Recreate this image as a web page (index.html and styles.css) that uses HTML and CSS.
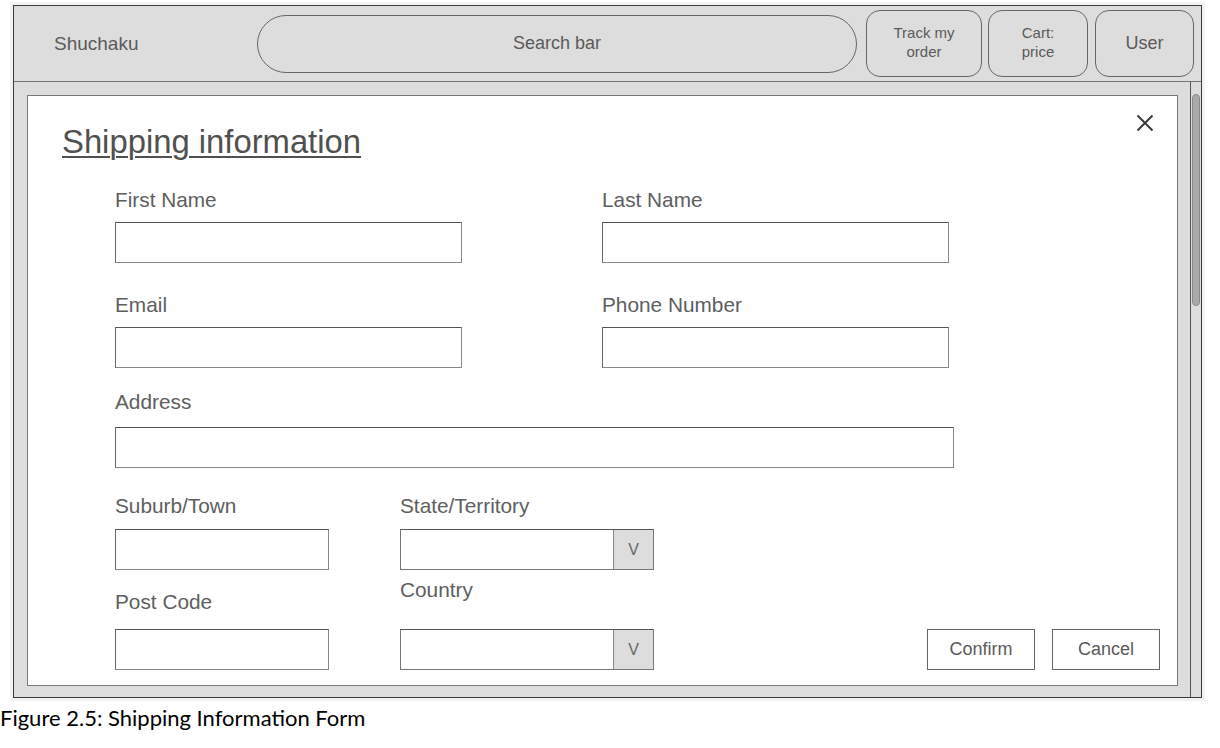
FILE: index.html
```html
<!DOCTYPE html>
<html lang="en">
<head>
    <meta charset="UTF-8">
    <meta name="viewport" content="width=device-width, initial-scale=1.0">
    <title>Shuchaku - Shipping information</title>
    <link rel="stylesheet" href="styles.css">
</head>
<body>
    <div class="frame">
        <header class="top-bar">
            <div class="logo">Shuchaku</div>
            <div class="search-bar">Search bar</div>
            <div class="nav-button nav-track">Track my<br>order</div>
            <div class="nav-button nav-cart">Cart:<br>price</div>
            <div class="nav-button nav-user">User</div>
        </header>

        <div class="frame-body">
            <div class="content">
                <div class="dialog">
                    <svg class="close-icon" width="18" height="18" viewBox="0 0 18 18">
                        <path d="M1.5 1.5 L16.5 16.5 M16.5 1.5 L1.5 16.5" stroke="#3a3a3a" stroke-width="2" fill="none"/>
                    </svg>
                    <h1 class="dialog-title">Shipping information</h1>

                    <form class="shipping-form">
                        <div class="form-row">
                            <div class="field">
                                <label class="field-label">First Name</label>
                                <div class="text-input"></div>
                            </div>
                            <div class="field">
                                <label class="field-label">Last Name</label>
                                <div class="text-input"></div>
                            </div>
                        </div>

                        <div class="form-row">
                            <div class="field">
                                <label class="field-label">Email</label>
                                <div class="text-input"></div>
                            </div>
                            <div class="field">
                                <label class="field-label">Phone Number</label>
                                <div class="text-input"></div>
                            </div>
                        </div>

                        <div class="form-row form-row-address">
                            <div class="field field-wide">
                                <label class="field-label">Address</label>
                                <div class="text-input"></div>
                            </div>
                        </div>

                        <div class="locality-grid">
                            <label class="field-label grid-suburb">Suburb/Town</label>
                            <label class="field-label grid-state">State/Territory</label>
                            <div class="text-input"></div>
                            <div class="select-input">
                                <div class="select-value"></div>
                                <div class="select-arrow">V</div>
                            </div>
                            <div></div>
                            <label class="field-label label-postcode">Post Code</label>
                            <label class="field-label label-country">Country</label>
                            <div></div>
                            <div class="text-input"></div>
                            <div class="select-input">
                                <div class="select-value"></div>
                                <div class="select-arrow">V</div>
                            </div>
                            <div class="form-actions">
                                <div class="action-button">Confirm</div>
                                <div class="action-button">Cancel</div>
                            </div>
                        </div>
                    </form>
                </div>
            </div>
            <div class="scrollbar">
                <div class="scroll-thumb"></div>
            </div>
        </div>
    </div>
    <p class="caption">Figure 2.5: Shipping Information Form</p>
</body>
</html>
```

FILE: styles.css
```css
body {
    margin: 0;
    background-color: #ffffff;
    font-family: 'Liberation Sans', Arial, sans-serif;
    color: #5a5a5a;
}

.frame {
    box-sizing: border-box;
    width: 1189px;
    height: 693px;
    margin: 5px 0 0 13px;
    border: 1px solid #3a3a3a;
    background-color: #dddddd;
    box-shadow: 0 0 0 3px #f2f2f2;
}

/* top bar */

.top-bar {
    box-sizing: border-box;
    height: 76px;
    display: flex;
    align-items: center;
    border-bottom: 1px solid #777;
}

.logo {
    width: 203px;
    padding-left: 40px;
    font-size: 19px;
}

.search-bar {
    box-sizing: border-box;
    width: 600px;
    height: 58px;
    border: 1px solid #666;
    border-radius: 29px;
    display: flex;
    align-items: center;
    justify-content: center;
    font-size: 18px;
}

.nav-button {
    box-sizing: border-box;
    height: 67px;
    border: 1px solid #666;
    border-radius: 14px;
    display: flex;
    align-items: center;
    justify-content: center;
    text-align: center;
    font-size: 15px;
    line-height: 19px;
}

.nav-track {
    width: 116px;
    margin-left: 9px;
    padding-bottom: 4px;
}

.nav-cart {
    width: 100px;
    margin-left: 6px;
    padding-bottom: 4px;
}

.nav-user {
    width: 99px;
    margin-left: 7px;
    font-size: 18px;
}

/* body area */

.frame-body {
    display: flex;
    height: 615px;
}

.content {
    flex: 1;
    padding: 13px 12px 11px 13px;
}

.scrollbar {
    box-sizing: border-box;
    width: 11px;
    border-left: 1px solid #555;
    padding: 12px 0 0 1px;
}

.scroll-thumb {
    box-sizing: border-box;
    width: 8px;
    height: 212px;
    background-color: #aaaaaa;
    border: 1px solid #8a8a8a;
    border-radius: 4px;
}

.dialog {
    position: relative;
    box-sizing: border-box;
    height: 591px;
    background-color: #ffffff;
    border: 1px solid #777;
    padding: 30px 17px 0 34px;
}

.close-icon {
    position: absolute;
    top: 18px;
    right: 23px;
}

.dialog-title {
    margin: 0;
    font-size: 32.8px;
    line-height: 32px;
    font-weight: normal;
    color: #505050;
    text-decoration: underline;
    text-decoration-thickness: 2px;
    text-underline-offset: 3px;
}

/* form */

.shipping-form {
    margin-left: 53px;
}

.form-row {
    display: flex;
    gap: 140px;
    margin-top: 32px;
}

.form-row-address {
    margin-top: 24px;
}

.field {
    width: 347px;
}

.field-wide {
    width: 839px;
}

.field-label {
    display: block;
    font-size: 20.8px;
    line-height: 20px;
    margin-bottom: 12px;
    color: #5e5e5e;
}

.field-wide .field-label {
    margin-bottom: 15px;
}

.text-input {
    box-sizing: border-box;
    height: 41px;
    border: 1px solid #888;
    border-top-color: #555;
    border-left-color: #666;
    background-color: #ffffff;
}

.locality-grid {
    display: grid;
    grid-template-columns: 214px 254px 1fr;
    grid-template-rows: 33px 41px 59px 41px;
    column-gap: 71px;
    margin-top: 28px;
}

.grid-suburb,
.grid-state {
    margin: 0;
}

.grid-state {
    grid-column: 2 / 4;
}

.label-postcode {
    margin: 22px 0 0;
}

.label-country {
    margin: 10px 0 0;
}

.select-input {
    box-sizing: border-box;
    display: flex;
    height: 41px;
    border: 1px solid #777;
    border-top-color: #555;
}

.select-value {
    flex: 1;
}

.select-arrow {
    width: 39px;
    border-left: 1px solid #888;
    background-color: #dddddd;
    display: flex;
    align-items: center;
    justify-content: center;
    font-size: 16px;
    color: #666;
}

.form-actions {
    display: flex;
    justify-content: flex-end;
    gap: 17px;
}

.action-button {
    box-sizing: border-box;
    width: 108px;
    height: 41px;
    border: 1px solid #666;
    display: flex;
    align-items: center;
    justify-content: center;
    font-size: 18px;
}

.caption {
    margin: 7px 0 0;
    font-family: Lato, 'Liberation Sans', sans-serif;
    font-size: 22px;
    line-height: 1.2;
    color: #000000;
}
```
